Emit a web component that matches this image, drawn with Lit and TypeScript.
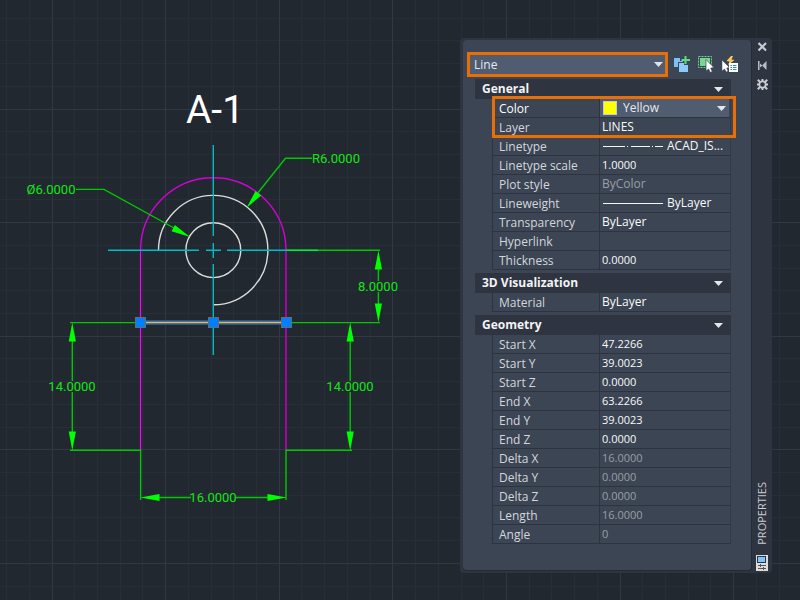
import { LitElement, html, svg, css, nothing } from "lit";
import { customElement, property } from "lit/decorators.js";
import { classMap } from "lit/directives/class-map.js";

type Row = {
  label: string;
  value?: string;
  kind?: "color" | "linetype" | "lineweight";
  dim?: boolean;
};
type Section = { title: string; rows: Row[] };

const SECTIONS: Section[] = [
  {
    title: "General",
    rows: [
      { label: "Color", value: "Yellow", kind: "color" },
      { label: "Layer", value: "LINES" },
      { label: "Linetype", value: "ACAD_IS...", kind: "linetype" },
      { label: "Linetype scale", value: "1.0000" },
      { label: "Plot style", value: "ByColor", dim: true },
      { label: "Lineweight", value: "ByLayer", kind: "lineweight" },
      { label: "Transparency", value: "ByLayer" },
      { label: "Hyperlink", value: "" },
      { label: "Thickness", value: "0.0000" },
    ],
  },
  { title: "3D Visualization", rows: [{ label: "Material", value: "ByLayer" }] },
  {
    title: "Geometry",
    rows: [
      { label: "Start X", value: "47.2266" },
      { label: "Start Y", value: "39.0023" },
      { label: "Start Z", value: "0.0000" },
      { label: "End X", value: "63.2266" },
      { label: "End Y", value: "39.0023" },
      { label: "End Z", value: "0.0000" },
      { label: "Delta X", value: "16.0000", dim: true },
      { label: "Delta Y", value: "0.0000", dim: true },
      { label: "Delta Z", value: "0.0000", dim: true },
      { label: "Length", value: "16.0000", dim: true },
      { label: "Angle", value: "0", dim: true },
    ],
  },
];

/* Model space: grid, part outline, centre lines and dimensions. */
@customElement("cad-drawing")
export class CadDrawing extends LitElement {
  static styles = css`
    :host { display: block; overflow: hidden; background: #222830; }
    svg { display: block; width: 100%; height: 100%; }
    .minor { stroke: #272e37; }
    .major { stroke: #313845; }
    .shape { fill: none; stroke: #dcdcdc; stroke-width: 1.4; }
    .outline { fill: none; stroke: #d400d8; stroke-width: 1.4; }
    .side { stroke: #ff00ff; stroke-width: 1.2; }
    .side-dark { stroke: #c000c4; stroke-width: 1.6; }
    .centre { fill: none; stroke: #00bcc4; stroke-width: 1.4; }
    .dim { fill: none; stroke: #00c800; stroke-width: 1.4; }
    .bright { stroke: #00e840; stroke-width: 1.5; }
    .tip { fill: #00ff00; }
    .halo { stroke: #2e509c; stroke-width: 5; }
    .selected { stroke: #d2c83c; stroke-width: 1.4; }
    .grip { fill: #0080ff; stroke: #666c74; }
    .note { fill: #14e614; font: 13px Roboto, sans-serif; text-anchor: middle; }
    .title { fill: #ffffff; font: 39px Roboto, sans-serif; text-anchor: middle; }
  `;

  private gridLines() {
    const out = [];
    for (const pass of [false, true]) {
      for (let i = 0; i < 120; i++) {
        const x = Math.floor(6.6 + i * 22.72) + 0.5;
        const y = Math.floor(-4.6 + i * 22.72) + 0.5;
        const xMajor = i % 5 === 2;
        const yMajor = i % 5 === 0;
        if (xMajor === pass)
          out.push(svg`<line class=${pass ? "major" : "minor"} x1=${x} y1="0" x2=${x} y2="100%"/>`);
        if (yMajor === pass)
          out.push(svg`<line class=${pass ? "major" : "minor"} x1="0" y1=${y} x2="100%" y2=${y}/>`);
      }
    }
    return out;
  }

  private tip(x: number, y: number, dx: number, dy: number) {
    const n = Math.hypot(dx, dy);
    const ux = dx / n;
    const uy = dy / n;
    const bx = x - ux * 19;
    const by = y - uy * 19;
    const pts = `${x},${y} ${bx - uy * 3.6},${by + ux * 3.6} ${bx + uy * 3.6},${by - ux * 3.6}`;
    return svg`<polygon class="tip" points=${pts}/>`;
  }

  render() {
    return html`<svg role="img" aria-label="Part A-1">
      ${this.gridLines()}
      <path class="outline" d="M140.5 250.5A72.75 72.75 0 0 1 286 250.5" />
      <path class="side" d="M140.5 250V450" />
      <path class="side-dark" d="M286 250V450" />
      <path class="shape" d="M158.5 250.5A54.7 54.7 0 1 1 213.3 304.8" />
      <circle class="shape" cx="213.3" cy="250.2" r="27.4" />
      <path class="centre" d="M213.3 145V236M213.3 243V258M213.3 264V355M108 250.3H199M206 250.3H221M227 250.3H286" />
      <path class="dim" d="M286 250.3H380M378.4 268V281M378.4 292V305
        M70 322.6H136M290 322.6H380M72.3 340V381M72.3 392V432M350.2 340V381M350.2 392V432
        M70 450.2H140.6V500M352 450.2H286V500M158 497.5H191M236 497.5H268
        M76 189.4H104L174 228M312 158.3H285.5L257 194" />
      <path class="bright" d="M286 250.3H318" />
      ${this.tip(378.4, 250.5, 0, -1)} ${this.tip(378.4, 322.5, 0, 1)}
      ${this.tip(72.3, 322.5, 0, -1)} ${this.tip(72.3, 450.5, 0, 1)}
      ${this.tip(350.2, 322.5, 0, -1)} ${this.tip(350.2, 450.5, 0, 1)}
      ${this.tip(140.5, 497.5, -1, 0)} ${this.tip(286.5, 497.5, 1, 0)}
      ${this.tip(190, 237, 17, 9)} ${this.tip(246.5, 208, -39, 49)}
      <path class="halo" d="M141 322.5H286" />
      <path class="selected" d="M141 322.5H286" />
      ${[140, 213, 286].map(
        (x) => svg`<rect class="grip" x=${x - 4.5} y="317.5" width="10" height="10"/>`
      )}
      <text class="title" x="215" y="123">A-1</text>
      <text class="note" x="51" y="194">Ø6.0000</text>
      <text class="note" x="336" y="163">R6.0000</text>
      <text class="note" x="378" y="291">8.0000</text>
      <text class="note" x="72" y="391">14.0000</text>
      <text class="note" x="350" y="391">14.0000</text>
      <text class="note" x="213" y="502">16.0000</text>
    </svg>`;
  }
}

@customElement("property-section")
export class PropertySection extends LitElement {
  @property({ attribute: false }) section!: Section;

  static styles = css`
    :host { display: block; }
    .head {
      display: flex; align-items: center; justify-content: space-between;
      width: 100%; height: 20px; padding: 0 8px 0 7px; border: 0; box-sizing: border-box;
      background: #2e3440; color: #f2f3f5;
      font: 700 12px/20px "Open Sans", sans-serif; text-align: left;
    }
    .caret { width: 9px; height: 5px; fill: #e4e6ea; flex: none; }
    .grid {
      display: table; width: calc(100% - 17px); margin-left: 17px;
      table-layout: fixed; border-collapse: separate; border-spacing: 0;
      font: 12px/18px "Open Sans", sans-serif;
    }
    .grid tr { height: 19px; }
    .grid th, .grid td {
      height: 18px; padding: 0; border-bottom: 1px solid #2d3440;
      border-left: 1px solid #2d3440; font-weight: 400; text-align: left;
    }
    .grid td { border-right: 1px solid #333b48; }
    .grid th { width: 106px; color: #d3d7dd; }
    .name { display: block; height: 18px; padding-left: 6px; line-height: 20px; white-space: nowrap; }
    .active { color: #ffffff; }
    .cell { display: flex; align-items: center; height: 18px; }
    .field {
      flex: 1; min-width: 0; width: 0; height: 18px; padding: 0 2px; border: 0;
      background: none; color: #f8f9fa; outline: 0;
      font: 12px/18px "Open Sans", sans-serif;
    }
    .number { font-size: 11px; }
    .dim { color: #999fa8; }
    .sample { width: 60px; height: 3px; margin: 0 2px 0 3px; flex: none; stroke: #f4f5f7; }
    .combo { position: relative; background: #505c70; margin-right: 1px; }
    .swatch {
      width: 12px; height: 12px; margin-left: 3px; flex: none;
      border: 1px solid #c8ccd2; background: #ffff00;
    }
    .pick {
      flex: 1; min-width: 0; height: 18px; padding: 0 20px 0 6px; border: 0;
      appearance: none; background: none; color: #e6e9ed; outline: 0;
      font: 12px/18px "Open Sans", sans-serif;
    }
    .combo .caret { position: absolute; right: 3px; pointer-events: none; }
  `;

  private caret() {
    return html`<svg class="caret" viewBox="0 0 9 5"><path d="M0 0H9L4.5 5Z" /></svg>`;
  }

  private cell(row: Row, id: string) {
    if (row.kind === "color")
      return html`<div class="cell combo">
        <span class="swatch"></span>
        <select class="pick" id=${id}><option>${row.value}</option></select>
        ${this.caret()}
      </div>`;
    const sample =
      row.kind === "linetype"
        ? html`<svg class="sample" viewBox="0 0 60 3"><path d="M0 1.5H22M24 1.5H25M28 1.5H47M49 1.5H50M52 1.5H60" /></svg>`
        : row.kind === "lineweight"
          ? html`<svg class="sample" viewBox="0 0 60 3"><path d="M0 1.5H60" /></svg>`
          : nothing;
    const classes = { field: true, dim: !!row.dim, number: /^\d/.test(row.value ?? "") };
    return html`<div class="cell">
      ${sample}<input class=${classMap(classes)} id=${id} .value=${row.value ?? ""} ?readonly=${row.dim} />
    </div>`;
  }

  render() {
    return html`
      <button class="head" aria-expanded="true">${this.section.title} ${this.caret()}</button>
      <table class="grid">
        ${this.section.rows.map((row, i) => {
          const id = `f${i}`;
          const name = { name: true, active: row.kind === "color" };
          return html`<tr>
            <th scope="row"><label class=${classMap(name)} for=${id}>${row.label}</label></th>
            <td>${this.cell(row, id)}</td>
          </tr>`;
        })}
      </table>
    `;
  }
}

/* Floating Properties palette. */
@customElement("properties-palette")
export class PropertiesPalette extends LitElement {
  static styles = css`
    :host {
      display: flex; width: 312px; box-sizing: border-box; padding: 2px 0 2px 3px;
      background: #2e3440; border-radius: 4px;
      font: 12px/18px "Open Sans", sans-serif;
    }
    .body {
      flex: 1; min-width: 0; display: flex; flex-direction: column;
      box-sizing: border-box; padding: 12px 20px 26px 12px;
      background: #3c4553; border-radius: 4px; border-right: 1px solid #252b35;
      border-bottom: 1px solid #252b35;
    }
    .bar { display: flex; align-items: center; margin: 0 -13px 2px -8px; height: 25px; }
    .object {
      position: relative; flex: 1; display: flex; align-items: center;
      border: 3px solid #e86e05; background: #505c70;
    }
    .type {
      width: 100%; height: 19px; padding: 0 20px 0 4px; border: 0; appearance: none;
      background: none; color: #e6e9ed; outline: 0; font: 12px/19px "Open Sans", sans-serif;
    }
    .caret {
      position: absolute; right: 2px; width: 9px; height: 5px; fill: #dfe2e6; pointer-events: none;
    }
    .tools { display: flex; gap: 8px; margin: 0 6px; }
    .tool, .mini { display: block; padding: 0; border: 0; background: none; }
    .tool svg { display: block; width: 16px; height: 17px; }
    .list { display: flex; flex-direction: column; gap: 3px; position: relative; }
    .mark {
      position: absolute; top: 17px; left: 17px; right: -5px; height: 36px;
      border: 3px solid #e86e05; pointer-events: none;
    }
    .rail {
      width: 20px; display: flex; flex-direction: column; align-items: center;
    }
    .minis { display: flex; flex-direction: column; gap: 8px; padding-top: 1px; }
    .mini svg { display: block; width: 11px; height: 11px; }
    .name {
      margin-top: auto; writing-mode: vertical-rl; rotate: 180deg; color: #c9ccd2;
      font: 11px/16px "Open Sans", sans-serif;
    }
    .badge { width: 12px; height: 16px; margin-top: 10px; }
  `;

  render() {
    return html`
      <div class="body">
        <div class="bar">
          <div class="object">
            <select class="type" aria-label="Object type"><option>Line</option></select>
            <svg class="caret" viewBox="0 0 9 5"><path d="M0 0H9L4.5 5Z" /></svg>
          </div>
          <div class="tools">
            <button class="tool" aria-label="Toggle PICKADD">
              <svg viewBox="0 0 16 17">
                <path fill="#7cc0f4" d="M0 2H6V5H9V6H4V11H0Z" />
                <path fill="#8bcafa" d="M5 7H10V9H14V16H5Z" />
                <path fill="#5fdb86" d="M10.500 0H12.500V3H16V5H12.500V8H10.500V5H7.500V3H10.500Z" />
              </svg>
            </button>
            <button class="tool" aria-label="Select objects">
              <svg viewBox="0 0 16 17">
                <rect x="2" y="2" width="10" height="8" fill="#7bd596" />
                <rect x="0.500" y="0.500" width="13" height="11" fill="none" stroke="#5fe085" stroke-dasharray="2 1" />
                <path fill="#fff" stroke="#3c4553" stroke-width=".7" d="M8 3.500V15L10.500 13L12.300 16.500L14.300 15.500L12.700 12.200L15.900 11.500Z" />
              </svg>
            </button>
            <button class="tool" aria-label="Quick select">
              <svg viewBox="0 0 16 17">
                <path fill="#ffc85f" d="M9 0L4.500 5L7.500 5.500L6 9L12.500 4L9.500 3.500L11 0Z" />
                <path fill="#fff" stroke="#3c4553" stroke-width=".5" d="M0 4V15L2.500 13L4.300 16L6 15L4.700 12L7.500 11.500Z" />
                <rect x="7" y="7" width="9" height="9" fill="#fff" />
                <path stroke="#2b85d0" d="M8.500 9.500H10M11 9.500H14.500M8.500 11.500H10M11 11.500H14.500M8.500 13.500H10M11 13.500H14.500" />
              </svg>
            </button>
          </div>
        </div>
        <div class="list">
          ${SECTIONS.map((s) => html`<property-section .section=${s}></property-section>`)}
          <div class="mark"></div>
        </div>
      </div>
      <div class="rail">
        <div class="minis">
          <button class="mini" aria-label="Close">
            <svg viewBox="0 0 11 11"><path stroke="#c9ccd2" stroke-width="2.200" d="M1.500 2L9 9.500M9 2L1.500 9.500" /></svg>
          </button>
          <button class="mini" aria-label="Auto-hide">
            <svg viewBox="0 0 11 11"><path fill="#b9bdc4" d="M1 1H2.500V10H1ZM3 3.500L5.500 5.500L3 7.500ZM9.500 1V10L5.500 6V5Z" /></svg>
          </button>
          <button class="mini" aria-label="Palette options">
            <svg viewBox="0 0 11 11">
              <circle cx="5.500" cy="5.500" r="3.200" fill="none" stroke="#c9ccd2" stroke-width="1.800" />
              <path stroke="#c9ccd2" stroke-width="2" d="M5.500 0V2M5.500 9V11M0 5.500H2M9 5.500H11M.8 .8L3 3M8 8L10.200 10.200M10.200 .8L8 3M.8 10.200L3 8" />
            </svg>
          </button>
        </div>
        <span class="name">PROPERTIES</span>
        <svg class="badge" viewBox="0 0 12 16">
          <rect width="12" height="16" fill="#dcdcdc" />
          <rect x="1.500" y="1.500" width="8" height="6" fill="#7cc4fa" stroke="#2e3440" />
          <path stroke="#555" fill="none" d="M2 10.500H10M2 13.500H10M4.500 9V12M7.500 12V15" />
        </svg>
      </div>
    `;
  }
}

@customElement("app-root")
export class AppRoot extends LitElement {
  static styles = css`
    :host { display: grid; min-height: 100vh; background: #222830; overflow: hidden; }
    .canvas, .palette { grid-area: 1 / 1; }
    .canvas { height: 100%; }
    .palette { justify-self: end; align-self: start; margin: 38px 28px 27px 0; }
  `;

  render() {
    return html`
      <cad-drawing class="canvas"></cad-drawing>
      <properties-palette class="palette"></properties-palette>
    `;
  }
}
